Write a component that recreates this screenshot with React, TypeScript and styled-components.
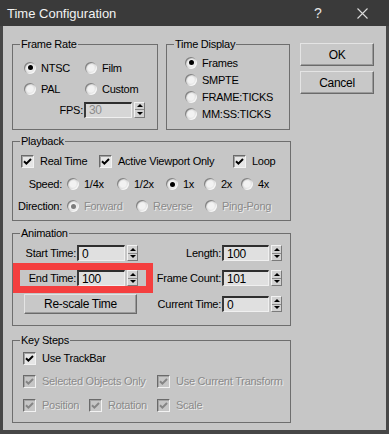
import styled, { createGlobalStyle } from 'styled-components';

const GlobalStyle = createGlobalStyle`
  html, body { margin: 0; padding: 0; background: #464646; }
  body { font-family: "Liberation Sans", Arial, sans-serif; }
  * { box-sizing: border-box; }
`;

const Window = styled.div`
  position: relative;
  width: 389px;
  height: 434px;
  background: #474747;
  display: flex;
  flex-direction: column;
`;

const TitleBar = styled.div`
  height: 26px;
  flex: none;
  background: #3a3a3a;
  color: #f2f2f2;
  display: flex;
  align-items: center;
  padding-left: 7px;
  font-size: 13px;
`;

const Title = styled.span`
  flex: 1;
`;

const HelpGlyph = styled.span`
  width: 12px;
  margin-right: 31px;
  font-size: 14px;
  color: #e4e4e4;
`;

const CloseGlyph = styled.svg`
  margin-right: 21px;
`;

const Client = styled.div`
  flex: 1;
  margin: 0 3px 4px;
  background: #c6c6c6;
  display: flex;
  align-items: flex-start;
  padding: 11px 0 0 9px;
  font-size: 11px;
  letter-spacing: -0.25px;
  color: #000;
`;

const MainColumn = styled.div`
  width: 279px;
  display: flex;
  flex-direction: column;
`;

const TopRow = styled.div`
  display: flex;
  gap: 8px;
`;

const Group = styled.fieldset<{ $w?: number; $h: number; $mt?: number }>`
  margin: ${p => p.$mt ?? 0}px 0 0;
  padding: 0;
  width: ${p => (p.$w ? `${p.$w}px` : '100%')};
  height: ${p => p.$h}px;
  min-width: 0;
  border: 1px solid #6e6e6e;
`;

const Legend = styled.legend`
  margin-left: 7px;
  padding: 0 1px;
  line-height: 14px;
`;

const Body = styled.div<{ $pt?: number }>`
  padding-top: ${p => p.$pt ?? 0}px;
`;

const Row = styled.div<{ $cols: string; $h: number; $pl?: number }>`
  display: grid;
  grid-template-columns: ${p => p.$cols};
  height: ${p => p.$h}px;
  align-items: center;
  padding-left: ${p => p.$pl ?? 0}px;
`;

const Option = styled.label<{ $gap?: number; $off?: boolean }>`
  display: flex;
  align-items: center;
  gap: ${p => p.$gap ?? 6}px;
  white-space: nowrap;
  line-height: 14px;
  color: ${p => (p.$off ? '#8a8a8a' : '#000')};
  text-shadow: ${p => (p.$off ? '1px 1px 0 #ececec' : 'none')};
`;

const RadioDot = styled.span<{ $on?: boolean; $off?: boolean }>`
  position: relative;
  flex: none;
  width: 12px;
  height: 12px;
  border-radius: 50%;
  background: radial-gradient(circle, #f2f2f2 0 3px, #d4d4d4 6px);
  box-shadow: inset 1px 1px 1px #7a7a7a, inset -1px -1px 0 #f6f6f6;
  &::after {
    content: '';
    display: ${p => (p.$on ? 'block' : 'none')};
    position: absolute;
    left: 3.5px;
    top: 3.5px;
    width: 5px;
    height: 5px;
    border-radius: 50%;
    background: ${p => (p.$off ? '#7c7c7c' : '#000')};
  }
`;

const Box = styled.span<{ $off?: boolean }>`
  flex: none;
  width: 13px;
  height: 13px;
  display: flex;
  align-items: center;
  justify-content: center;
  background: ${p => (p.$off ? '#c6c6c6' : '#e6e6e6')};
  border: 1px solid;
  border-color: #6a6a6a #f2f2f2 #f2f2f2 #6a6a6a;
  box-shadow: inset 1px 1px 0 #a4a4a4;
`;

const FieldLabel = styled.span<{ $w: number }>`
  width: ${p => p.$w}px;
  text-align: right;
  padding-right: 1px;
  white-space: nowrap;
  line-height: 14px;
`;

const Spin = styled.span`
  display: flex;
  align-items: center;
  gap: 2px;
`;

const FieldBox = styled.span<{ $w: number; $off?: boolean }>`
  width: ${p => p.$w}px;
  height: 16px;
  display: flex;
  align-items: center;
  padding-left: 3px;
  font-size: 12px;
  letter-spacing: -0.4px;
  background: ${p => (p.$off ? '#d6d6d6' : '#e0e0e0')};
  color: ${p => (p.$off ? '#8c8c8c' : '#000')};
  border-style: solid;
  border-width: 2px 1px 1px 2px;
  border-color: #2e2e2e #f0f0f0 #f0f0f0 #3a3a3a;
`;

const Spinner = styled.span`
  width: 11px;
  height: 16px;
  display: flex;
  flex-direction: column;
  background: #d2d2d2;
  border: 1px solid;
  border-color: #f2f2f2 #7a7a7a #7a7a7a #f2f2f2;
`;

const SpinHalf = styled.span<{ $down?: boolean }>`
  flex: 1;
  display: flex;
  align-items: center;
  justify-content: center;
  border-top: ${p => (p.$down ? '1px solid #8a8a8a' : 'none')};
  &::before {
    content: '';
    border-left: 3px solid transparent;
    border-right: 3px solid transparent;
    ${p => (p.$down ? 'border-top: 3px solid #000;' : 'border-bottom: 3px solid #000;')}
  }
`;

const Button = styled.button<{ $w?: number; $h: number }>`
  width: ${p => (p.$w ? `${p.$w}px` : '100%')};
  height: ${p => p.$h}px;
  padding: 0;
  font-family: "Liberation Sans", Arial, sans-serif;
  font-size: 12px;
  letter-spacing: -0.3px;
  color: #000;
  background: #c8c8c8;
  border: 1px solid;
  border-color: #e4e4e4 #6a6a6a #6a6a6a #e4e4e4;
  box-shadow: inset -1px -1px 0 #9a9a9a;
`;

const RescaleButton = styled(Button)`
  grid-column: span 2;
  justify-self: start;
  margin-left: 11px;
`;

const SideColumn = styled.div`
  width: 74px;
  margin: 6px 0 0 9px;
  display: flex;
  flex-direction: column;
  gap: 5px;
`;

const Highlight = styled.div`
  position: absolute;
  left: 13px;
  top: 263px;
  width: 140px;
  height: 30px;
  border: 7px solid #f43f3f;
`;

const Radio = ({ label, on, off }: { label: string; on?: boolean; off?: boolean }) => (
  <Option $gap={5} $off={off}>
    <RadioDot $on={on} $off={off} />
    {label}
  </Option>
);

const Check = ({ label, off }: { label: string; off?: boolean }) => (
  <Option $off={off}>
    <Box $off={off}>
      <svg width="9" height="9" viewBox="0 0 9 9">
        <path d="M1 4.2 L3.4 6.6 L8 2" stroke={off ? '#858585' : '#000'} strokeWidth="2" fill="none" />
      </svg>
    </Box>
    {label}
  </Option>
);

const Field = ({ label, lw, w, value, off }: { label: string; lw: number; w: number; value: string; off?: boolean }) => (
  <>
    <FieldLabel $w={lw}>{label}</FieldLabel>
    <Spin>
      <FieldBox $w={w} $off={off}>{value}</FieldBox>
      <Spinner>
        <SpinHalf />
        <SpinHalf $down />
      </Spinner>
    </Spin>
  </>
);

export default function App() {
  return (
    <>
      <GlobalStyle />
      <Window>
        <TitleBar>
          <Title>Time Configuration</Title>
          <HelpGlyph>?</HelpGlyph>
          <CloseGlyph width="11" height="11" viewBox="0 0 11 11">
            <path d="M0.5 0.5 L10.5 10.5 M10.5 0.5 L0.5 10.5" stroke="#dcdcdc" strokeWidth="1.1" />
          </CloseGlyph>
        </TitleBar>
        <Client>
          <MainColumn>
            <TopRow>
              <Group $w={146} $h={93}>
                <Legend>Frame Rate</Legend>
                <Body $pt={6}>
                  <Row $cols="61px auto" $h={21} $pl={11}>
                    <Radio label="NTSC" on />
                    <Radio label="Film" />
                  </Row>
                  <Row $cols="61px auto" $h={21} $pl={11}>
                    <Radio label="PAL" />
                    <Radio label="Custom" />
                  </Row>
                  <Row $cols="71px auto" $h={21}>
                    <Field label="FPS:" lw={71} w={48} value="30" off />
                  </Row>
                </Body>
              </Group>
              <Group $w={124} $h={93}>
                <Legend>Time Display</Legend>
                <Body $pt={3}>
                  <Row $cols="auto" $h={17} $pl={18}>
                    <Radio label="Frames" on />
                  </Row>
                  <Row $cols="auto" $h={17} $pl={18}>
                    <Radio label="SMPTE" />
                  </Row>
                  <Row $cols="auto" $h={17} $pl={18}>
                    <Radio label="FRAME:TICKS" />
                  </Row>
                  <Row $cols="auto" $h={17} $pl={18}>
                    <Radio label="MM:SS:TICKS" />
                  </Row>
                </Body>
              </Group>
            </TopRow>

            <Group $h={87} $mt={4}>
              <Legend>Playback</Legend>
              <Body $pt={3}>
                <Row $cols="78px 134px auto" $h={20} $pl={8}>
                  <Check label="Real Time" />
                  <Check label="Active Viewport Only" />
                  <Check label="Loop" />
                </Row>
                <Row $cols="54px 50px 49px 38px 37px auto" $h={26}>
                  <FieldLabel $w={54} style={{ paddingRight: 5 }}>Speed:</FieldLabel>
                  <Radio label="1/4x" />
                  <Radio label="1/2x" />
                  <Radio label="1x" on />
                  <Radio label="2x" />
                  <Radio label="4x" />
                </Row>
                <Row $cols="54px 69px 69px auto" $h={18}>
                  <FieldLabel $w={54} style={{ paddingRight: 5 }}>Direction:</FieldLabel>
                  <Radio label="Forward" on off />
                  <Radio label="Reverse" off />
                  <Radio label="Ping-Pong" off />
                </Row>
              </Body>
            </Group>

            <Group $h={100} $mt={5}>
              <Legend>Animation</Legend>
              <Body>
                <Row $cols="64px 61px 84px 61px" $h={26}>
                  <Field label="Start Time:" lw={64} w={48} value="0" />
                  <Field label="Length:" lw={84} w={47} value="100" />
                </Row>
                <Row $cols="64px 61px 84px 61px" $h={24}>
                  <Field label="End Time:" lw={64} w={48} value="100" />
                  <Field label="Frame Count:" lw={84} w={47} value="101" />
                </Row>
                <Row $cols="64px 61px 84px 61px" $h={28}>
                  <RescaleButton $w={113} $h={20}>Re-scale Time</RescaleButton>
                  <Field label="Current Time:" lw={84} w={47} value="0" />
                </Row>
              </Body>
            </Group>

            <Group $h={90} $mt={7}>
              <Legend>Key Steps</Legend>
              <Body>
                <Row $cols="auto" $h={22} $pl={10}>
                  <Check label="Use TrackBar" />
                </Row>
                <Row $cols="134px auto" $h={24} $pl={10}>
                  <Check label="Selected Objects Only" off />
                  <Check label="Use Current Transform" off />
                </Row>
                <Row $cols="66px 68px auto" $h={24} $pl={10}>
                  <Check label="Position" off />
                  <Check label="Rotation" off />
                  <Check label="Scale" off />
                </Row>
              </Body>
            </Group>
          </MainColumn>

          <SideColumn>
            <Button $h={23}>OK</Button>
            <Button $h={23}>Cancel</Button>
          </SideColumn>
        </Client>
        <Highlight />
      </Window>
    </>
  );
}
